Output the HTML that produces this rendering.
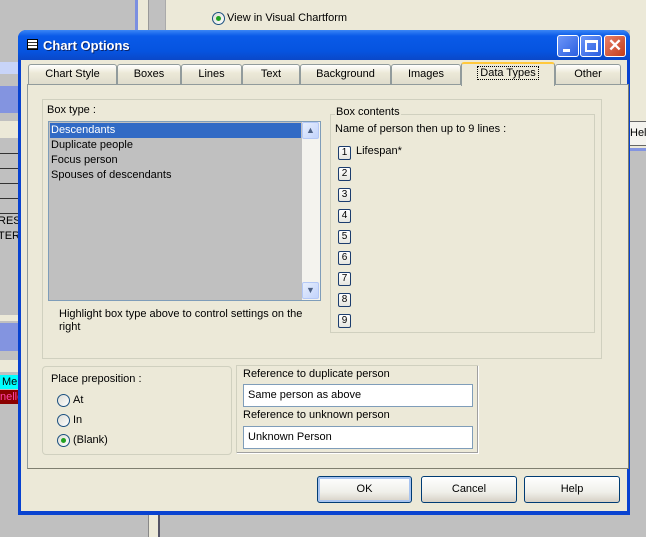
<!DOCTYPE html>
<html><head><meta charset="utf-8"><style>
*{box-sizing:border-box;margin:0;padding:0}
body{width:646px;height:537px;overflow:hidden;position:relative;background:#c0c0c0;font-family:"Liberation Sans",Arial,sans-serif;font-size:11px;color:#000}
.a{position:absolute}
.t{position:absolute;white-space:nowrap;font-size:11px}
.tab{position:absolute;top:64px;height:21px;background:linear-gradient(#fff,#ece9d8 40%,#dedbcb);border:1px solid #919b9c;border-bottom:none;border-radius:3px 3px 0 0;text-align:center;line-height:19px}
.nb{position:absolute;left:338px;width:13px;height:14px;border:1px solid #1c3d6e;border-radius:2px;background:linear-gradient(#fff,#e6e6e0);font-size:10px;text-align:center;line-height:12px}
.rad{position:absolute;width:13px;height:13px;border-radius:50%;border:1px solid #1c5180;background:linear-gradient(135deg,#dcdcd6,#fff)}
.btn{position:absolute;top:476px;height:27px;border:1px solid #003c74;border-radius:3px;background:linear-gradient(#fff,#f0f0ea 60%,#d6d0c5);text-align:center;line-height:25px}
.inp{position:absolute;left:243px;width:230px;height:23px;border:1px solid #7f9db9;background:#fff;padding-left:4px;line-height:21px}
</style></head><body>
<div class="a" style="left:0;top:0;width:135px;height:537px;background:#c0c0c0"></div>
<div class="a" style="left:135px;top:0;width:3px;height:30px;background:#7b8fe0"></div>
<div class="a" style="left:138px;top:0;width:10px;height:30px;background:#ece9d8"></div>
<div class="a" style="left:148px;top:0;width:1px;height:30px;background:#999"></div>
<div class="a" style="left:165px;top:0;width:481px;height:30px;background:#ece9d8;border-left:1px solid #aaa"></div>
<div class="rad" style="left:212px;top:12px"><div class="a" style="left:3px;top:3px;width:5px;height:5px;border-radius:50%;background:#21a121"></div></div>
<div class="t" style="left:227px;top:12px">View in Visual Chartform</div>
<div class="a" style="left:0;top:62px;width:20px;height:12px;background:#c8d4f8"></div>
<div class="a" style="left:0;top:86px;width:20px;height:27px;background:#8394e0"></div>
<div class="a" style="left:0;top:121px;width:20px;height:17px;background:#ece9d8"></div>
<div class="a" style="left:0;top:139px;width:20px;height:75px;background:repeating-linear-gradient(#c0c0c0 0,#c0c0c0 14px,#333 14px,#333 15px)"></div>
<div class="t" style="left:-2px;top:215px">REST</div>
<div class="t" style="left:-2px;top:230px">TERI</div>
<div class="a" style="left:0;top:315px;width:20px;height:6px;background:#ece9d8"></div>
<div class="a" style="left:0;top:323px;width:20px;height:28px;background:#8394e0"></div>
<div class="a" style="left:0;top:360px;width:20px;height:12px;background:#ece9d8"></div>
<div class="a" style="left:0;top:375px;width:20px;height:14px;background:#00ffff;line-height:14px;padding-left:2px;overflow:hidden">Mer</div>
<div class="a" style="left:0;top:390px;width:20px;height:14px;background:#8b0000;color:#ff44aa;line-height:14px;overflow:hidden">nelle</div>
<div class="a" style="left:148px;top:514px;width:12px;height:23px;background:#ece9d8;border-left:1px solid #888;border-right:2px solid #556"></div>
<div class="a" style="left:630px;top:30px;width:16px;height:118px;background:#ece9d8"></div>
<div class="a" style="left:630px;top:121px;width:16px;height:25px;background:#f4f3ee;border-top:1px solid #666;border-bottom:1px solid #666;line-height:23px;overflow:hidden">Help</div>
<div class="a" style="left:630px;top:148px;width:16px;height:3px;background:#8394e0"></div>

<div class="a" style="left:18px;top:30px;width:612px;height:485px;background:#0842d0;border-radius:8px 8px 0 0"></div>
<div class="a" style="left:18px;top:30px;width:612px;height:30px;background:linear-gradient(#3b86f5,#0a5ae8 20%,#0654e0 70%,#0a48c8);border-radius:8px 8px 0 0"></div>
<div class="a" style="left:27px;top:39px;width:11px;height:11px;border:1px solid #000;background:repeating-linear-gradient(#fff 0,#fff 2px,#333 2px,#333 3px)"></div>
<div class="t" style="left:43px;top:38px;color:#fff;font-weight:bold;font-size:13px;text-shadow:1px 1px #0a246a">Chart Options</div>
<div class="a" style="left:557px;top:35px;width:22px;height:22px;border:1px solid #fff;border-radius:3px;background:linear-gradient(135deg,#6d96f8,#2b5fe0)"><div class="a" style="left:5px;top:13px;width:7px;height:3px;background:#fff"></div></div>
<div class="a" style="left:580px;top:35px;width:22px;height:22px;border:1px solid #fff;border-radius:3px;background:linear-gradient(135deg,#6d96f8,#2b5fe0)"><div class="a" style="left:4px;top:4px;width:13px;height:12px;border:2px solid #fff;border-top-width:3px"></div></div>
<div class="a" style="left:604px;top:35px;width:22px;height:22px;border:1px solid #fff;border-radius:3px;background:linear-gradient(135deg,#e8806a,#c23d1a);color:#fff;font-size:17px;font-weight:bold;text-align:center;line-height:19px">✕</div>
<div class="a" style="left:21px;top:60px;width:606px;height:451px;background:#ece9d8"></div>

<div class="tab" style="left:28px;width:89px">Chart Style</div>
<div class="tab" style="left:117px;width:64px">Boxes</div>
<div class="tab" style="left:181px;width:61px">Lines</div>
<div class="tab" style="left:242px;width:58px">Text</div>
<div class="tab" style="left:300px;width:91px">Background</div>
<div class="tab" style="left:391px;width:70px">Images</div>
<div class="tab" style="left:555px;width:66px">Other</div>
<div class="a" style="left:27px;top:84px;width:602px;height:385px;border:1px solid #919b9c;border-right-color:#7f7f70;border-bottom-color:#7f7f70;background:#ece9d8"></div>
<div class="tab" style="left:461px;top:62px;width:94px;height:24px;background:#ece9d8;border-top:2px solid #ffc83c;border-bottom:none"><span style="border:1px dotted #000;padding:0 2px">Data Types</span></div>

<div class="a" style="left:42px;top:99px;width:560px;height:260px;border:1px solid #d0d0bf;background:#ece9d8"></div>
<div class="t" style="left:47px;top:104px">Box type :</div>
<div class="a" style="left:48px;top:121px;width:273px;height:180px;border:1px solid #7f9db9;background:#c0c0c0"></div>
<div class="a" style="left:50px;top:123px;width:251px;height:15px;background:#316ac5"></div>
<div class="t" style="left:51px;top:124px;color:#fff">Descendants</div>
<div class="t" style="left:51px;top:139px">Duplicate people</div>
<div class="t" style="left:51px;top:154px">Focus person</div>
<div class="t" style="left:51px;top:169px">Spouses of descendants</div>
<div class="a" style="left:302px;top:122px;width:18px;height:178px;background:#f4f3ee"></div>
<div class="a" style="left:302px;top:122px;width:17px;height:17px;border:1px solid #b4c8f6;border-radius:2px;background:linear-gradient(135deg,#e6eefc,#c2d3fc);text-align:center;font-size:9px;line-height:15px;color:#4d6185">▲</div>
<div class="a" style="left:302px;top:282px;width:17px;height:17px;border:1px solid #b4c8f6;border-radius:2px;background:linear-gradient(135deg,#e6eefc,#c2d3fc);text-align:center;font-size:9px;line-height:15px;color:#4d6185">▼</div>
<div class="t" style="left:59px;top:308px;line-height:13px;white-space:normal;width:260px">Highlight box type above to control settings on the right</div>

<div class="a" style="left:330px;top:114px;width:265px;height:219px;border:1px solid #d0d0bf"></div>
<div class="t" style="left:335px;top:106px;background:#ece9d8;padding:0 1px">Box contents</div>
<div class="t" style="left:335px;top:123px">Name of person then up to 9 lines :</div>
<div class="nb" style="top:146px">1</div><div class="t" style="left:356px;top:145px">Lifespan*</div>
<div class="nb" style="top:167px">2</div>
<div class="nb" style="top:188px">3</div>
<div class="nb" style="top:209px">4</div>
<div class="nb" style="top:230px">5</div>
<div class="nb" style="top:251px">6</div>
<div class="nb" style="top:272px">7</div>
<div class="nb" style="top:293px">8</div>
<div class="nb" style="top:314px">9</div>

<div class="a" style="left:42px;top:366px;width:190px;height:89px;border:1px solid #d0d0bf;border-radius:4px"></div>
<div class="t" style="left:51px;top:373px">Place preposition :</div>
<div class="rad" style="left:57px;top:394px"></div><div class="t" style="left:73px;top:394px">At</div>
<div class="rad" style="left:57px;top:414px"></div><div class="t" style="left:73px;top:414px">In</div>
<div class="rad" style="left:57px;top:434px"><div class="a" style="left:3px;top:3px;width:5px;height:5px;border-radius:50%;background:#21a121"></div></div><div class="t" style="left:73px;top:434px">(Blank)</div>

<div class="a" style="left:236px;top:365px;width:243px;height:89px;border:1px solid #d0d0bf;border-right-color:#fff;border-bottom-color:#fff;box-shadow:inset -1px -1px #a0a0a0"></div>
<div class="t" style="left:243px;top:368px">Reference to duplicate person</div>
<div class="inp" style="top:384px">Same person as above</div>
<div class="t" style="left:243px;top:409px">Reference to unknown person</div>
<div class="inp" style="top:426px">Unknown Person</div>

<div class="btn" style="left:317px;width:95px;box-shadow:inset 0 0 0 2px #a8c4f0">OK</div>
<div class="btn" style="left:421px;width:96px">Cancel</div>
<div class="btn" style="left:524px;width:96px">Help</div>
</body></html>
